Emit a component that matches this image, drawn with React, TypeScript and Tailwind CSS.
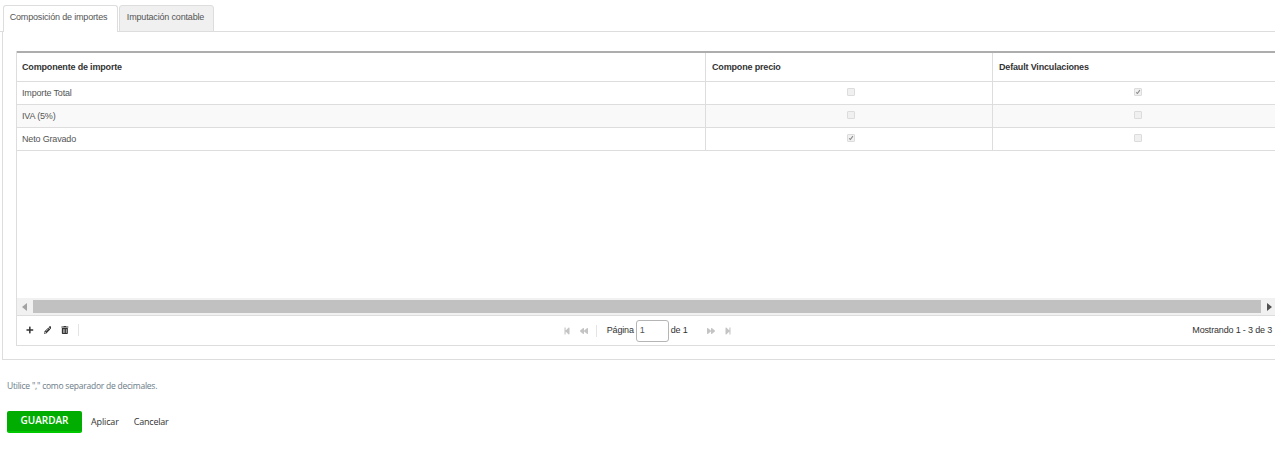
import React from "react";
import { FaPlus, FaPencilAlt, FaTrashAlt, FaStepBackward, FaBackward, FaForward, FaStepForward } from "react-icons/fa";

interface Row {
  name: string;
  compone: boolean;
  vinculacion: boolean;
}

const rows: Row[] = [
  { name: "Importe Total", compone: false, vinculacion: true },
  { name: "IVA (5%)", compone: false, vinculacion: false },
  { name: "Neto Gravado", compone: true, vinculacion: false },
];

// Checkbox deshabilitado, mas chico que el nativo
const SmallCheck = ({ checked }: { checked: boolean }) => (
  <span className="flex h-[8px] w-[8px] items-center justify-center rounded-[1px] border border-[#dcdcdc] bg-[#f0f0f0]">
    {checked && (
      <svg viewBox="0 0 8 8" className="h-[8px] w-[8px]">
        <path d="M1.5 4.5 L3.2 6 L6.5 1.5" fill="none" stroke="#8a8a8a" strokeWidth="1.4" />
      </svg>
    )}
  </span>
);

const PagerIcon = ({ children }: { children: React.ReactNode }) => (
  <span className="flex w-[17px] justify-center text-[8px] text-[#c4c4c4]">{children}</span>
);

const Divider = () => <span className="mx-[3px] h-[12px] w-px bg-[#e4e4e4]" />;

export default function App() {
  return (
    <div className="h-[455px] w-[1275px] overflow-hidden bg-white font-['Liberation_Sans',Arial,sans-serif] text-[9px] tracking-[-0.17px] text-[#333]">
      <div className="flex h-[32px] items-end border-b border-[#ddd] pl-[3px] pt-[5px]">
        <div className="-mb-px flex h-[27px] w-[115px] items-center justify-center rounded-t-[3px] border border-b-0 border-[#ddd] bg-white pb-[2px] pr-[4px] text-[#555]">
          Composición de importes
        </div>
        <div className="-mb-px ml-px flex h-[27px] w-[95px] items-center justify-center rounded-t-[3px] border border-[#ddd] bg-[#f0f0f0] pb-[2px] pr-[2px] text-[#555]">
          Imputación contable
        </div>
      </div>

      <div className="ml-[2px] h-[328px] w-[1290px] border-x border-b border-[#ddd] pl-[13px] pt-[19px]">
        <div className="h-[295px] w-[1274px] border-x border-b border-[#ddd]">
          <div className="flex h-[30px] items-center border-t-2 border-t-[#adadad] font-bold">
            <div className="flex h-full w-[688px] items-center pl-[5px] pt-[1px]">Componente de importe</div>
            <div className="flex h-full w-[287px] items-center border-l border-[#ddd] pl-[6px] pt-[1px]">Compone precio</div>
            <div className="flex h-full flex-1 items-center border-l border-[#ddd] pl-[6px] pt-[1px]">Default Vinculaciones</div>
          </div>
          {rows.map((row, i) => (
            <div key={row.name} className={`flex h-[23px] border-t border-[#ddd] ${i === 1 ? "bg-[#f9f9f9]" : ""}`}>
              <div className="flex w-[688px] items-center pl-[5px] pt-[1px] text-[#555]">{row.name}</div>
              <div className="flex w-[287px] justify-center border-l border-[#ddd] pl-[3px] pt-[6px]">
                <SmallCheck checked={row.compone} />
              </div>
              <div className="flex w-[283px] justify-center border-l border-[#ddd] pl-[7px] pt-[6px]">
                <SmallCheck checked={row.vinculacion} />
              </div>
            </div>
          ))}
          <div className="h-[148px] border-t border-[#ddd]" />
          <div className="flex h-[17px] items-center bg-[#f1f1f1]">
            <div className="flex w-[16px] justify-center">
              <svg viewBox="0 0 6 8" className="h-[8px] w-[6px]"><path d="M5 0 L0 4 L5 8 Z" fill="#a3a3a3" /></svg>
            </div>
            <div className="h-[13px] w-[1228px] bg-[#c1c1c1]" />
            <div className="flex w-[16px] justify-center">
              <svg viewBox="0 0 6 8" className="h-[8px] w-[6px]"><path d="M1 0 L6 4 L1 8 Z" fill="#505050" /></svg>
            </div>
          </div>
          <div className="flex h-[30px] w-[1258px] items-center border-t border-[#ddd]">
            <div className="flex w-[62px] items-center gap-[10px] pb-[1px] pl-[9px] text-[8px] text-[#333]">
              <FaPlus />
              <FaPencilAlt />
              <FaTrashAlt />
              <span className="-ml-px h-[12px] w-px bg-[#e4e4e4]" />
            </div>
            <div className="flex flex-1 items-center justify-center pl-[24px]">
              <PagerIcon><FaStepBackward /></PagerIcon>
              <PagerIcon><FaBackward /></PagerIcon>
              <Divider />
              <span className="ml-[7px]">Página</span>
              <span className="mx-[2px] flex h-[22px] w-[33px] items-center rounded-[3px] border border-[#b5b5b5] pl-[3px] text-[#555]">1</span>
              <span>de 1</span>
              <span className="ml-[5px] mr-[4px]"><Divider /></span>
              <PagerIcon><FaForward /></PagerIcon>
              <PagerIcon><FaStepForward /></PagerIcon>
            </div>
            <div className="pr-[3px]">Mostrando 1 - 3 de 3</div>
          </div>
        </div>
      </div>

      <div className="pl-[7px] font-['Open_Sans',sans-serif] tracking-normal">
        <p className="mt-[20px] text-[8.5px] leading-[11px] tracking-[-0.23px] text-[#6b7b88]">Utilice "," como separador de decimales.</p>
        <div className="mt-[20px] flex items-center">
          <button className="h-[22px] w-[75px] rounded-[2px] border-b-2 border-b-[#00c800] bg-[#00ad00] pb-[1px] text-[10px] font-semibold text-white">GUARDAR</button>
          <span className="ml-[9px] pb-[1px] text-[9px] tracking-[-0.15px]">Aplicar</span>
          <span className="ml-[15px] pb-[1px] text-[9px] tracking-[-0.2px]">Cancelar</span>
        </div>
      </div>
    </div>
  );
}
